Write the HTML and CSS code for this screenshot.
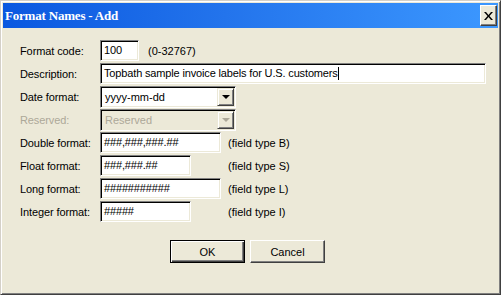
FILE: index.html
```html
<!DOCTYPE html>
<html lang="en">
<head>
    <meta charset="UTF-8">
    <title>Format Names - Add</title>
    <link rel="stylesheet" href="styles.css">
</head>
<body>
    <div class="window">
        <div class="titlebar">
            <span class="title">Format Names - Add</span>
            <span class="close-btn">
                <svg width="9" height="8" viewBox="0 0 9 8">
                    <path d="M0 0h2l2.5 3 2.5-3h2L5.5 4 9 8H7L4.5 5 2 8H0l3.5-4z" fill="#000"/>
                </svg>
            </span>
        </div>

        <form class="form">
            <div class="row">
                <label class="lbl">Format code:</label>
                <div class="field w-code">100</div>
                <span class="hint hint-code">(0-32767)</span>
            </div>
            <div class="row">
                <label class="lbl">Description:</label>
                <div class="field w-desc">Topbath sample invoice labels for U.S. customers<span class="caret"></span></div>
            </div>
            <div class="row">
                <label class="lbl">Date format:</label>
                <div class="combo">
                    <div class="combo-text">yyyy-mm-dd</div>
                    <span class="drop-btn"><span class="arrow"></span></span>
                </div>
            </div>
            <div class="row">
                <label class="lbl disabled">Reserved:</label>
                <div class="combo combo-off">
                    <div class="combo-text">Reserved</div>
                    <span class="drop-btn"><span class="arrow"></span></span>
                </div>
            </div>
            <div class="row">
                <label class="lbl">Double format:</label>
                <div class="field w-long">###,###,###.##</div>
                <span class="hint hint-long">(field type B)</span>
            </div>
            <div class="row">
                <label class="lbl">Float format:</label>
                <div class="field w-short">###,###.##</div>
                <span class="hint hint-short">(field type S)</span>
            </div>
            <div class="row">
                <label class="lbl">Long format:</label>
                <div class="field w-long">###########</div>
                <span class="hint hint-long">(field type L)</span>
            </div>
            <div class="row">
                <label class="lbl">Integer format:</label>
                <div class="field w-short">#####</div>
                <span class="hint hint-short">(field type I)</span>
            </div>

            <div class="buttons">
                <button type="button" class="btn btn-default">OK</button>
                <button type="button" class="btn">Cancel</button>
            </div>
        </form>
    </div>
</body>
</html>
```

FILE: styles.css
```css
body {
    margin: 0;
    padding: 0;
    background: #ece9d8;
    font-family: "Liberation Sans", Arial, sans-serif;
    font-size: 11px;
    color: #000;
}
.window {
    width: 501px;
    height: 295px;
    box-sizing: border-box;
    background: #ece9d8;
    border: 1px solid;
    border-color: #d4d0c8 #404040 #404040 #d4d0c8;
    box-shadow: inset 1px 1px 0 #fff, inset -1px -1px 0 #808080;
    padding: 2px;
}
.titlebar {
    height: 25px;
    display: flex;
    align-items: center;
    justify-content: space-between;
    padding: 0 1px 0 2px;
    background: linear-gradient(to right, #0a58e0, #2374ec 45%, #3c98ff);
}
.title {
    color: #fff;
    font-family: "Liberation Serif", "Times New Roman", serif;
    font-weight: bold;
    font-size: 13px;
    letter-spacing: -0.2px;
}
.close-btn {
    width: 17px;
    height: 21px;
    box-sizing: border-box;
    display: flex;
    align-items: center;
    justify-content: center;
    background: #ece9d8;
    border: 1px solid;
    border-color: #fff #404040 #404040 #fff;
    box-shadow: inset -1px -1px 0 #808080;
}
.form {
    margin: 0;
    padding: 12px 0 0 17px;
    display: flex;
    flex-direction: column;
    gap: 2px;
}
.row {
    display: flex;
    align-items: center;
    height: 21px;
}
.lbl {
    width: 80px;
    flex: none;
    letter-spacing: -0.1px;
}
.lbl.disabled {
    color: #aca899;
}
.field {
    height: 21px;
    box-sizing: border-box;
    background: #fff;
    border: 1px solid;
    border-color: #808080 #fff #fff #808080;
    box-shadow: inset 1px 1px 0 #000, inset -1px -1px 0 #ece9d8;
    padding: 3px 0 0 3px;
    white-space: nowrap;
    line-height: 13px;
    letter-spacing: -0.15px;
}
.w-code { width: 39px; }
.w-desc { width: 386px; }
.w-long { width: 121px; }
.w-short { width: 91px; }
.caret {
    display: inline-block;
    width: 1px;
    height: 13px;
    background: #000;
    vertical-align: top;
}
.hint-code { margin-left: 9px; }
.hint-long { margin-left: 7px; }
.hint-short { margin-left: 37px; }
.combo {
    width: 136px;
    height: 22px;
    box-sizing: border-box;
    display: flex;
    background: #fff;
    border: 1px solid;
    border-color: #808080 #fff #fff #808080;
    box-shadow: inset 1px 1px 0 #000, inset -1px -1px 0 #ece9d8;
    padding: 1px;
}
.combo-text {
    flex: 1;
    padding: 3px 0 0 3px;
    line-height: 13px;
}
.combo-off {
    background: #ece9d8;
}
.combo-off .combo-text {
    color: #aca899;
}
.drop-btn {
    width: 17px;
    box-sizing: border-box;
    display: flex;
    align-items: center;
    justify-content: center;
    background: #ece9d8;
    border: 1px solid;
    border-color: #ece9d8 #404040 #404040 #ece9d8;
    box-shadow: inset 1px 1px 0 #fff, inset -1px -1px 0 #808080;
}
.arrow {
    width: 0;
    height: 0;
    border-left: 4px solid transparent;
    border-right: 4px solid transparent;
    border-top: 4px solid #000;
    margin-top: 1px;
}
.combo-off .arrow {
    border-top-color: #aca899;
}
.buttons {
    display: flex;
    gap: 5px;
    padding-left: 150px;
    margin-top: 16px;
}
.btn {
    width: 75px;
    height: 23px;
    box-sizing: border-box;
    font-family: "Liberation Sans", Arial, sans-serif;
    font-size: 11px;
    color: #000;
    background: #ece9d8;
    border: 1px solid;
    border-color: #fff #404040 #404040 #fff;
    box-shadow: inset -1px -1px 0 #808080;
    padding: 0;
}
.btn-default {
    border: 1px solid #000;
    box-shadow: inset 1px 1px 0 #fff, inset -1px -1px 0 #404040, inset -2px -2px 0 #808080;
}
```
